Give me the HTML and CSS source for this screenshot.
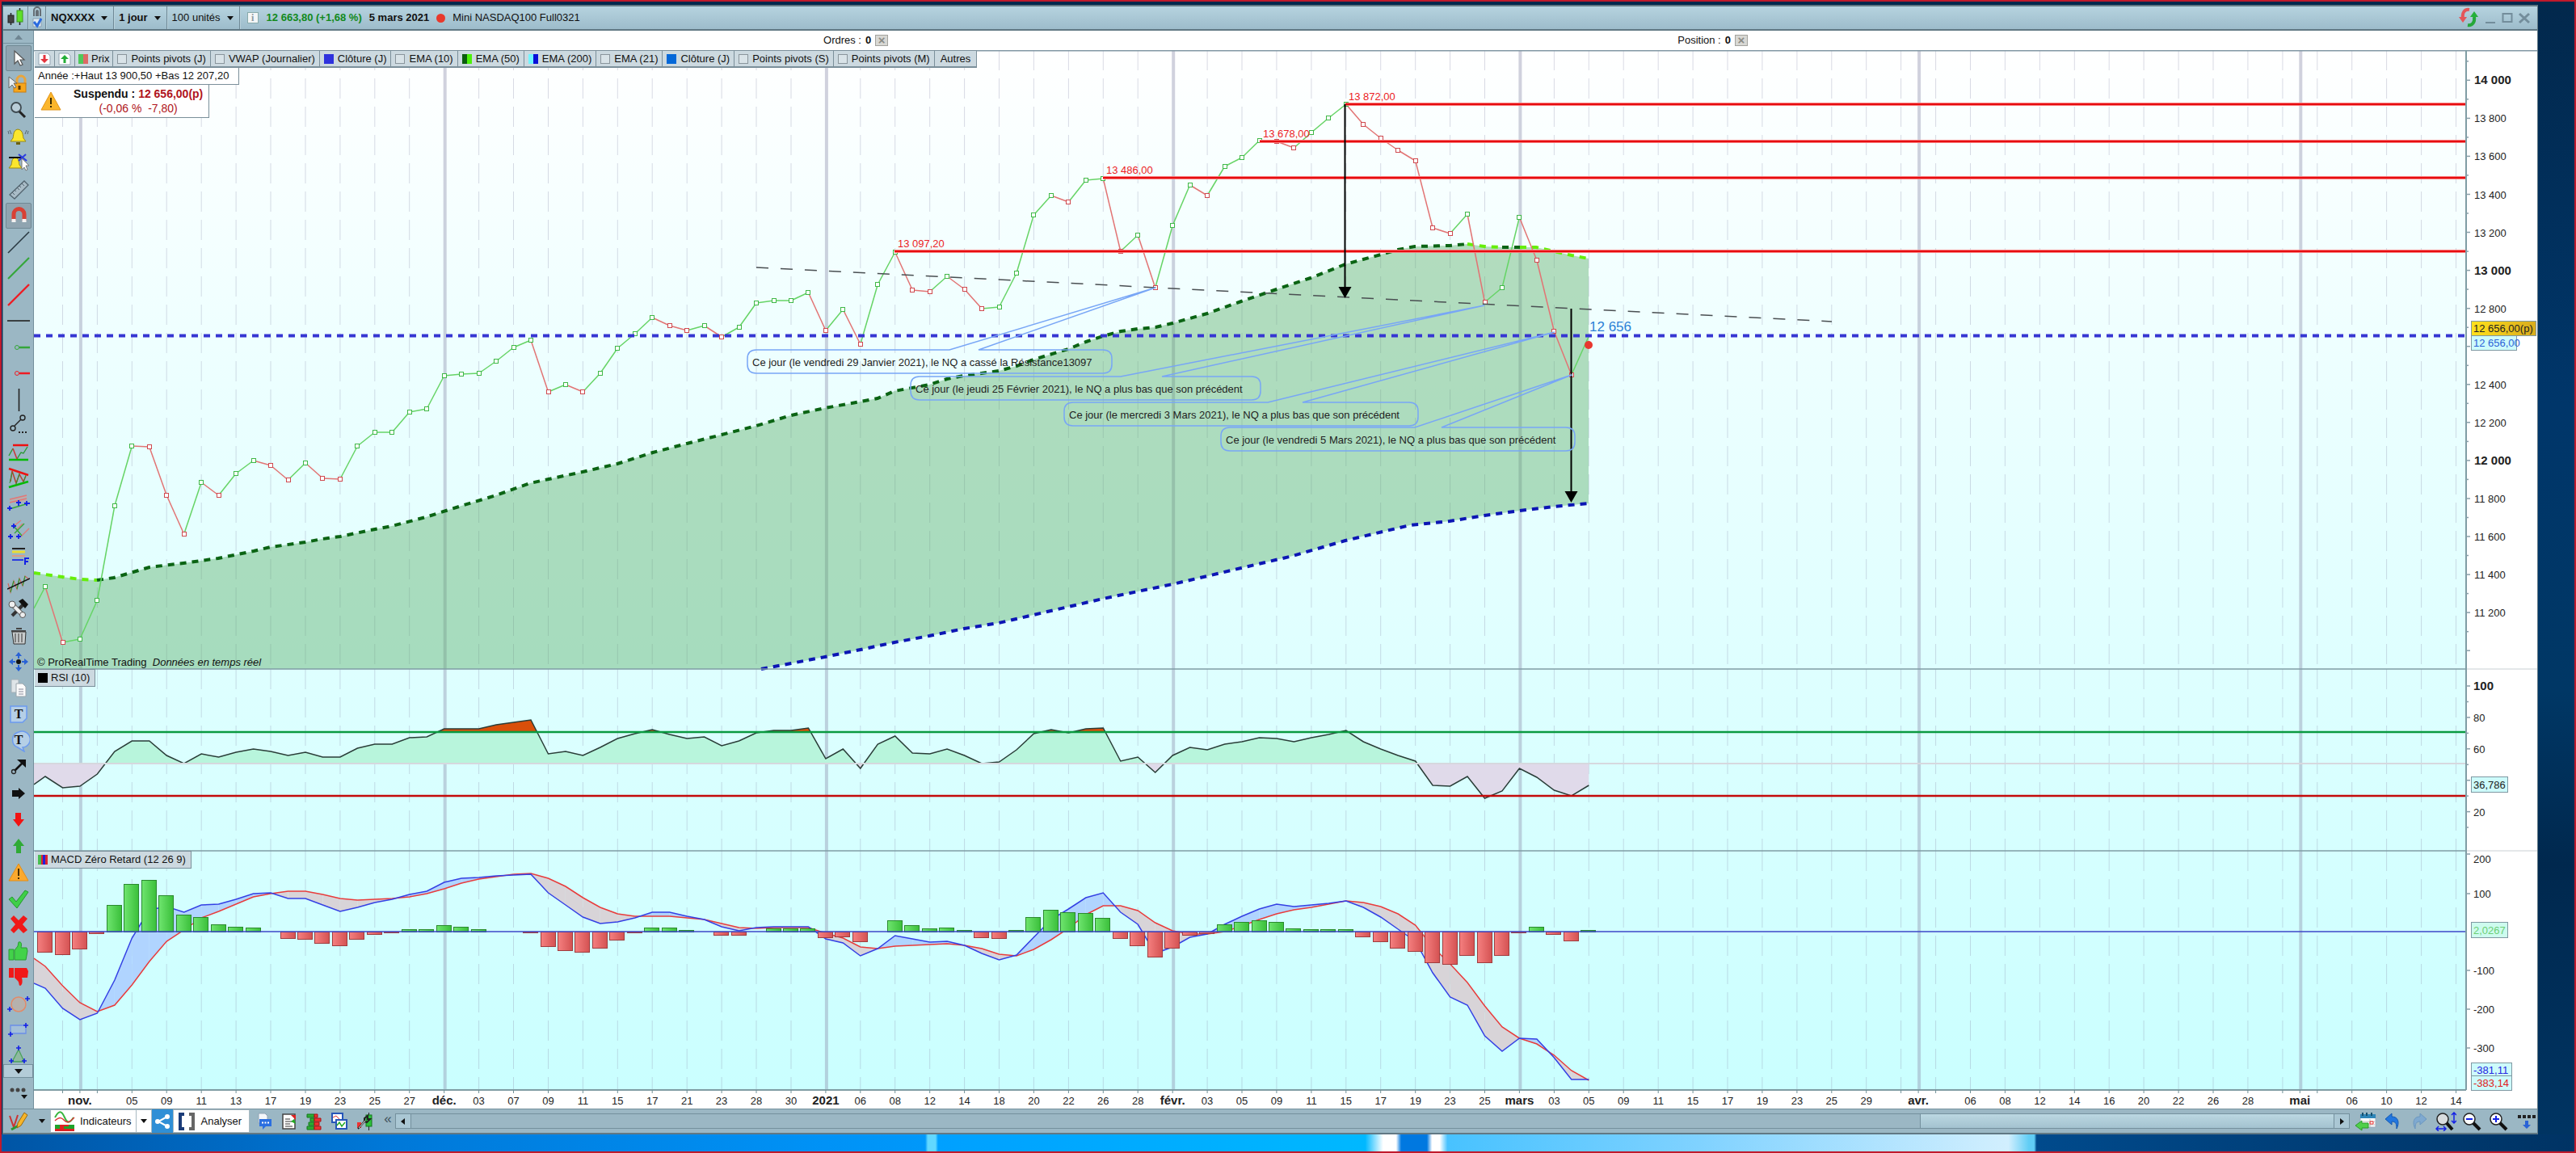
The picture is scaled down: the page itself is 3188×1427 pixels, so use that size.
FILE: index.html
```html
<!DOCTYPE html>
<html lang="fr">
<head>
<meta charset="utf-8">
<title>Mini NASDAQ100 Full0321</title>
<link rel="stylesheet" href="styles.css">
</head>
<body>
<div class="window">
  <header class="titlebar">
    <div class="cell candle"><svg width="20" height="30" viewBox="0 0 20 30"><path d="M4.500 9v15M15.500 3v21" stroke="#222" stroke-width="1.500"/><rect x="1" y="12" width="7" height="9" fill="#444" stroke="#222"/><rect x="12" y="6" width="7" height="14" fill="#5fe02a" stroke="#3a9a1c"/></svg></div>
    <div class="cell link"><svg width="16" height="28" viewBox="0 0 16 28"><path d="M4 12V5a4 4 0 0 1 8 0v7M7 12V6a1 1 0 0 1 2 0v6" fill="none" stroke="#666f76" stroke-width="2"/><path d="M3 15h10v10H3z" fill="#dfeaf2" stroke="#8a9fb0"/><path d="M4 19l4 5 5-9" fill="none" stroke="#2a6be0" stroke-width="3"/></svg></div>
    <button class="cell pick"><b>NQXXXX</b><i class="caret"></i></button>
    <button class="cell pick"><b>1 jour</b><i class="caret"></i></button>
    <button class="cell pick">100 unités<i class="caret"></i></button>
    <div class="quote"><span class="info">i</span><b class="up">12 663,80 (+1,68 %)</b><b>5 mars 2021</b><span class="dot"></span><span>Mini NASDAQ100 Full0321</span></div>
    <div class="controls">
      <button aria-label="Synchroniser"><svg width="26" height="26" viewBox="0 0 26 26"><path d="M14 3C8 2 5 7 6 13" fill="none" stroke="#e4565a" stroke-width="4"/><path d="M1 12h10l-5 7z" fill="#e4565a"/><path d="M12 22c6 1 9-4 8-10" fill="none" stroke="#25a73a" stroke-width="4"/><path d="M15 12h10l-5-7z" fill="#25b03a"/></svg></button>
      <button aria-label="Réduire"><svg width="14" height="16" viewBox="0 0 14 16"><path d="M1 14h12" stroke="#738d9b" stroke-width="2"/></svg></button>
      <button aria-label="Agrandir"><svg width="14" height="16" viewBox="0 0 14 16"><path d="M1.500 3h11v10h-11z" fill="none" stroke="#738d9b" stroke-width="2"/></svg></button>
      <button aria-label="Fermer"><svg width="14" height="16" viewBox="0 0 14 16"><path d="M1 3l12 11M13 3L1 14" stroke="#738d9b" stroke-width="3"/></svg></button>
    </div>
  </header>

  <div class="main">
    <nav class="tools">
      <button class="scroll-up" aria-label="Monter"><svg width="10" height="6" viewBox="0 0 10 6"><path d="M0 6l5-6 5 6z" fill="#6f8592"/></svg></button>
      <div class="tool-list">
        <button class="on"><svg viewBox="0 0 28 28"><path d="M9 5v16l4-4 3 6 3-1-3-6h5z" fill="#fff" stroke="#555" stroke-width="1.200"/></svg></button>
        <button><svg viewBox="0 0 28 28"><path d="M12 13V8a5 5 0 0 1 10 0v5" fill="none" stroke="#e9a53c" stroke-width="3"/><rect x="8" y="12" width="15" height="11" fill="#f7a61c" stroke="#c97d10"/><path d="M15 15v5" stroke="#5a3800" stroke-width="3"/><path d="M2 4v14l4-4 3 4 2-1-3-5h4z" fill="#e8eef2" stroke="#666"/></svg></button>
        <button><svg viewBox="0 0 28 28"><circle cx="11" cy="10" r="6" fill="#b9cdd8" stroke="#3f4b52" stroke-width="1.800"/><path d="M15 15l7 7" stroke="#222" stroke-width="3"/></svg></button>
        <button><svg viewBox="0 0 28 28"><path d="M13 4c-6 1-5 8-6 11l-3 4h19l-3-4c-1-3 0-10-7-11z" fill="#fbe62d" stroke="#9a8a10"/><path d="M11 20h5v3h-5z" fill="#6b6010"/><path d="M3 5l2 5M1 6l1 4M24 5l-2 5M26 6l-1 4" stroke="#55656e"/></svg></button>
        <button><svg viewBox="0 0 28 28"><path d="M10 7c-5 1-4 6-5 9l-3 4h16l-3-4c-1-3 0-8-5-9z" fill="#fbe62d" stroke="#9a8a10"/><path d="M2 7h18" stroke="#111" stroke-width="2"/><path d="M14 3l10 8M23 3l-9 8" stroke="#2b3be0" stroke-width="2"/><path d="M18 8v14l3-3 2 4 2-1-2-5h4z" fill="#fff" stroke="#777"/></svg></button>
        <button><svg viewBox="0 0 28 28"><path d="M3 20L21 3l5 5L9 25z" fill="#a9bcc7" stroke="#52646f" stroke-width="1.300"/><path d="M6 17l3 3M9 14l2 2M12 11l3 3M15 9l2 2M18 6l3 3" stroke="#52646f"/></svg></button>
        <button class="on"><svg viewBox="0 0 28 28"><path d="M8 20v-8a6.500 6.500 0 0 1 13 0v8" fill="none" stroke="#d94034" stroke-width="5"/><path d="M5.500 18h5v4h-5zM18.500 18h5v4h-5z" fill="#f2f2f2"/></svg></button>
        <button><svg viewBox="0 0 28 28"><path d="M1 27L27 1" stroke="#2a3a42" stroke-width="1.600"/></svg></button>
        <button><svg viewBox="0 0 28 28"><path d="M1 27L27 1" stroke="#35a63a" stroke-width="2.200"/></svg></button>
        <button><svg viewBox="0 0 28 28"><path d="M1 27L27 1" stroke="#ee1c24" stroke-width="2.400"/></svg></button>
        <button><svg viewBox="0 0 28 28"><path d="M0 14h28" stroke="#222" stroke-width="1.600"/></svg></button>
        <button><svg viewBox="0 0 28 28"><path d="M15 14h13" stroke="#35a63a" stroke-width="2.500"/><circle cx="12" cy="14" r="2.500" fill="none" stroke="#35a63a"/></svg></button>
        <button><svg viewBox="0 0 28 28"><path d="M15 14h13" stroke="#ee1c24" stroke-width="2.500"/><circle cx="12" cy="14" r="2.500" fill="none" stroke="#ee1c24"/></svg></button>
        <button><svg viewBox="0 0 28 28"><path d="M14.500 0v28" stroke="#222" stroke-width="1.600"/></svg></button>
        <button><svg viewBox="0 0 28 28"><path d="M9 14l8-8" stroke="#222" stroke-width="1.500"/><circle cx="7" cy="17" r="3" fill="none" stroke="#222" stroke-width="1.400"/><circle cx="19" cy="4" r="3" fill="none" stroke="#222" stroke-width="1.400"/><path d="M14 22h12" stroke="#222" stroke-width="2" stroke-dasharray="2 2"/></svg></button>
        <button><svg viewBox="0 0 28 28"><path d="M7 5h19" stroke="#e11" stroke-width="2.500"/><path d="M2 23h24" stroke="#0b0" stroke-width="2.500"/><path d="M2 18l5-9M12 22l5-8 3 1 5-8" fill="none" stroke="#2a9a35" stroke-width="1.400"/><path d="M7 9l5 13" stroke="#c33" stroke-width="1.500"/></svg></button>
        <button><svg viewBox="0 0 28 28"><path d="M2 2l24 8" stroke="#e11" stroke-width="2.500"/><path d="M2 25l24-7" stroke="#0b0" stroke-width="2.500"/><path d="M4 18l2-13 5 15 4-11 5 9 3-7" fill="none" stroke="#b5402f" stroke-width="1.500"/><path d="M3 20l3-13M11 21l4-13M20 19l3-9" stroke="#2a9a35"/></svg></button>
        <button><svg viewBox="0 0 28 28"><path d="M4 12V8l20-5v8z" fill="#c9a6a0" opacity=".6"/><path d="M3 8l21-5M3 12l21-5" stroke="#e07878" stroke-width="1.400"/><path d="M6 19l20-6" stroke="#35a63a" stroke-width="1.400"/><path d="M0 19h6M3 16v6M21 13h7M24 10v6M11 12h6M14 9v7" stroke="#1420e6" stroke-width="1.800"/></svg></button>
        <button><svg viewBox="0 0 28 28"><path d="M7 9l10-8M17 21l10-10M11 13L19 5" stroke="#de7a7a" stroke-width="1.400"/><path d="M9 17L21 5M8 8l10 12" stroke="#35a63a" stroke-width="1.400"/><path d="M5 8h6M8 5v6M1 21h6M4 18v6M11 21h6M14 18v6" stroke="#1420e6" stroke-width="1.800"/></svg></button>
        <button><svg viewBox="0 0 28 28"><path d="M6 4h16" stroke="#222" stroke-width="2"/><path d="M6 8h16" stroke="#e9dd35" stroke-width="3"/><path d="M6 13h16" stroke="#dd9a86" stroke-width="2"/><path d="M6 18h14" stroke="#2c3ce0" stroke-width="2"/><path d="M22 24v-8h5M22 20h4" stroke="#1420e6" stroke-width="2" fill="none"/></svg></button>
        <button><svg viewBox="0 0 28 28"><path d="M1 14l3 11 4-14 4 10 3-13 4 9 3-12 5 4" fill="none" stroke="#d0645a" stroke-width="1.200"/><path d="M4 25l4-14M12 21l3-13M19 17l3-12" stroke="#2a9a35" stroke-width="1.200"/><path d="M0 21L28 8" stroke="#111" stroke-width="1.500"/></svg></button>
        <button><svg viewBox="0 0 28 28"><path d="M6 22L19 9" stroke="#333" stroke-width="4"/><path d="M14 4l5-3 7 7-4 5z" fill="#111"/><path d="M5 7l14 14" stroke="#555" stroke-width="6"/><path d="M5 7l14 14" stroke="#eee" stroke-width="4"/><circle cx="6" cy="8" r="4" fill="#eee" stroke="#555"/><circle cx="19" cy="21" r="3.500" fill="#eee" stroke="#555"/></svg></button>
        <button><svg viewBox="0 0 28 28"><path d="M6 9h17l-1 15H8z" fill="#c8cccd" stroke="#333"/><path d="M10 11v11M14 11v11M18 11v11" stroke="#666" stroke-width="1.500"/><path d="M5 8h18M11 5h7" stroke="#444" stroke-width="2"/></svg></button>
        <button><svg viewBox="0 0 28 28"><path d="M14 3v22M3 14h22" stroke="#2a62d6" stroke-width="2" stroke-dasharray="7 8"/><path d="M14 2l4 5h-8zM14 26l4-5h-8zM2 14l5-4v8zM26 14l-5-4v8z" fill="#2a62d6"/><circle cx="14" cy="14" r="3" fill="#111"/></svg></button>
        <button><svg viewBox="0 0 28 28"><path d="M5 3h9v16H5z" fill="#dfe5e8" stroke="#a3afb6"/><path d="M11 8h8l4 4v12H11z" fill="#fafafa" stroke="#9aa5ac"/><path d="M14 15h6M14 18h6M14 21h6" stroke="#889"/></svg></button>
        <button><svg viewBox="0 0 28 28"><path d="M4 4h20v15l-5 5H4z" fill="#b5cfe6" stroke="#6b9af0" stroke-width="1.500"/><text x="14" y="19" class="tee">T</text></svg></button>
        <button><svg viewBox="0 0 28 28"><path d="M14 3a10 10 0 1 1 5 19l2 5-8-5a10 10 0 0 1 1-19z" fill="#b5cfe6" stroke="#6b9af0" stroke-width="1.500"/><text x="14" y="18" class="tee">T</text></svg></button>
        <button><svg viewBox="0 0 28 28"><path d="M9 19L20 8" stroke="#111" stroke-width="2.500"/><path d="M12 5h11v10z" fill="#111"/><circle cx="8" cy="20" r="2.500" fill="none" stroke="#222" stroke-width="1.300"/></svg></button>
        <button><svg viewBox="0 0 28 28"><path d="M6 10h8V7l8 7-8 7v-3H6z" fill="#111"/></svg></button>
        <button><svg viewBox="0 0 28 28"><path d="M10 6h7v8h4l-7 9-7-9h3z" fill="#f11313"/></svg></button>
        <button><svg viewBox="0 0 28 28"><path d="M11 23h6v-9h4l-7-9-7 9h4z" fill="#2faa35"/></svg></button>
        <button><svg viewBox="0 0 28 28"><path d="M14 4L2 25h24z" fill="#fba92d" stroke="#e58d15"/><path d="M14 10v9M14 21v2" stroke="#4a3000" stroke-width="2"/></svg></button>
        <button><svg viewBox="0 0 28 28"><path d="M2 15l4-3 5 6L22 4l4 2-14 20z" fill="#3fcf48" stroke="#239a2c"/></svg></button>
        <button><svg viewBox="0 0 28 28"><path d="M4 7l4-4 6 6 6-6 5 4-6 7 6 7-5 4-6-6-6 6-4-4 6-7z" fill="#f01818"/></svg></button>
        <button><svg viewBox="0 0 28 28"><path d="M2 12h6v13H2zM9 13l4-5 1-5c4-1 4 3 3 7h7l1 4-2 11H9z" fill="#42d24a" stroke="#2a9c33"/></svg></button>
        <button><svg viewBox="0 0 28 28"><path d="M2 3h6v12H2zM9 3h15l2 4-1 8h-7c1 4 1 9-2 10-2 0-1-4-3-6l-4-4z" fill="#f01818"/></svg></button>
        <button><svg viewBox="0 0 28 28"><circle cx="14" cy="15" r="9" fill="#b6b1ad" stroke="#e28a68" stroke-width="1.500"/><path d="M0 21h6M3 18v6M22 8h6M25 5v6" stroke="#1420e6" stroke-width="1.600"/></svg></button>
        <button><svg viewBox="0 0 28 28"><path d="M4 9h19v10H4z" fill="#a3bfd8" stroke="#6b8fe8" stroke-width="1.300"/><path d="M1 20h6M4 17v6M20 9h6M23 6v6" stroke="#1420e6" stroke-width="1.600"/></svg></button>
        <button><svg viewBox="0 0 28 28"><path d="M14 6l7 15H6z" fill="#8fb9a0" stroke="#4aa35a" stroke-width="1.300"/><path d="M11 4h6M14 1v6M2 20h6M5 17v6M18 20h6M21 17v6" stroke="#1420e6" stroke-width="1.600"/></svg></button>
      </div>
      <button class="scroll-down" aria-label="Descendre"><svg width="10" height="6" viewBox="0 0 10 6"><path d="M0 0l5 6 5-6z" fill="#111"/></svg></button>
      <button class="more" aria-label="Plus d'outils"><svg width="24" height="20" viewBox="0 0 24 20"><circle cx="4" cy="6" r="2.500" fill="#444"/><circle cx="11" cy="6" r="2.500" fill="#444"/><circle cx="18" cy="6" r="2.500" fill="#444"/><path d="M15 12h8l-4 5z" fill="#111"/></svg></button>
    </nav>

    <div class="content">
      <div class="orders">
        <div>Ordres : <b>0</b><button aria-label="Fermer les ordres">×</button></div>
        <div>Position : <b>0</b><button aria-label="Fermer la position">×</button></div>
      </div>
      <section class="chart" id="chart">
        <svg id="plot" role="img" aria-label="Graphique journalier"></svg>
        <div class="legend">
          <button class="io"><svg width="16" height="16" viewBox="0 0 16 16"><path d="M1 1h11l3 3v11H1z" fill="#fff" stroke="#93a5b3"/><path d="M6.500 3h3v5H13l-5 5-5-5h3.500z" fill="#e3343e"/></svg></button>
          <button class="io"><svg width="16" height="16" viewBox="0 0 16 16"><path d="M1 1h11l3 3v11H1z" fill="#fff" stroke="#93a5b3"/><path d="M6.500 13h3V8H13L8 3 3 8h3.500z" fill="#25ae38"/></svg></button>
          <button class="short"><i class="sw price"></i>Prix</button>
          <button><i class="sw off"></i>Points pivots (J)</button>
          <button><i class="sw off"></i>VWAP (Journalier)</button>
          <button><i class="sw close"></i>Clôture (J)</button>
          <button><i class="sw off"></i>EMA (10)</button>
          <button><i class="sw ema50"></i>EMA (50)</button>
          <button><i class="sw ema200"></i>EMA (200)</button>
          <button><i class="sw off"></i>EMA (21)</button>
          <button><i class="sw close2"></i>Clôture (J)</button>
          <button><i class="sw off"></i>Points pivots (S)</button>
          <button><i class="sw off"></i>Points pivots (M)</button>
          <button class="others">Autres</button>
        </div>
        <div class="box year">Année :+Haut 13 900,50 +Bas 12 207,20</div>
        <div class="box halted">
          <svg width="26" height="24" viewBox="0 0 26 24"><path d="M13 1L1 23h24z" fill="#fbb62d" stroke="#e2951a"/><path d="M13 8v8M13 18v2" stroke="#3a2a00" stroke-width="2"/></svg>
          <div><b>Suspendu : <span>12 656,00(p)</span></b><br><span>(-0,06 %&nbsp; -7,80)</span></div>
        </div>
        <div class="panes">
          <div class="pane price"><p class="copy">© ProRealTime Trading&nbsp; <em>Données en temps réel</em></p></div>
          <div class="pane rsi"><button class="tag"><i class="sw black"></i>RSI (10)</button></div>
          <div class="pane macd"><button class="tag"><i class="sw macdsw"></i>MACD Zéro Retard (12 26 9)</button></div>
        </div>
      </section>
    </div>
  </div>

  <footer class="toolbar">
    <button class="ico"><svg width="24" height="26" viewBox="0 0 24 26"><path d="M1 6l5 14 5-15" fill="none" stroke="#c33" stroke-width="2"/><path d="M3 23l9-5" stroke="#2a9a35" stroke-width="3"/><path d="M10 21l1-6L19 2l4 3-8 13z" fill="#f7b52a" stroke="#9a6a10"/></svg></button>
    <button class="drop"><i class="caret"></i></button>
    <button class="white"><svg width="26" height="26" viewBox="0 0 26 26"><path d="M1 8c5-9 8-9 12 0s7 6 11 0" fill="none" stroke="#3ab53f" stroke-width="2"/><path d="M1 12c6-5 8-4 12 0s8 0 12-4" fill="none" stroke="#d33" stroke-width="1.500"/><path d="M1 17h24v8H1z" fill="#d22"/><path d="M1 17h6v5h5v-3h6v-2h7v5H1z" fill="#1fa32a"/></svg>Indicateurs</button>
    <button class="white narrow"><i class="caret"></i></button>
    <button class="share" aria-label="Partager"><svg width="20" height="20" viewBox="0 0 20 20"><path d="M16 4L5 10l11 6" fill="none" stroke="#fff" stroke-width="2"/><circle cx="16" cy="4" r="3" fill="#fff"/><circle cx="4" cy="10" r="3" fill="#fff"/><circle cx="16" cy="16" r="3" fill="#fff"/></svg></button>
    <button class="white"><svg width="24" height="26" viewBox="0 0 24 26"><path d="M9 4H4v18h5" fill="none" stroke="#1b3c78" stroke-width="4"/><path d="M15 4h5v18h-5" fill="none" stroke="#666" stroke-width="4"/></svg><span class="analyse">Analyser</span></button>
    <div class="icons">
      <button><svg viewBox="0 0 20 22"><path d="M3 1h8l3 3v9H3z" fill="#f4f7fa" stroke="#8fa3b5"/><path d="M4 8h15v9h-7l-4 4v-4H4z" fill="#2b6fe0"/><path d="M7 12.500h10" stroke="#fff" stroke-width="2" stroke-dasharray="2 1.500"/></svg></button>
      <button><svg viewBox="0 0 20 22"><path d="M2 2h15v18H2z" fill="#fff" stroke="#444" stroke-width="1.500"/><path d="M5 8h6M5 11h8M5 14h6M5 17h9" stroke="#333"/><path d="M12 3h6v6z" fill="#d22"/><path d="M12 11l4-3 2 6z" fill="#2a2"/></svg></button>
      <button><svg viewBox="0 0 20 22"><path d="M1 2h9v4H1zM5 7h5v4H5zM3 12h7v4H3zM1 17h9v4H1z" fill="#2cae35" stroke="#14761c"/><path d="M10 2h4v4h-4zM10 7h8v4h-8zM10 12h6v4h-6zM10 17h8v4h-8z" fill="#e33" stroke="#a11"/></svg></button>
      <button><svg viewBox="0 0 20 22"><path d="M1 1h13v11H1z" fill="#fff" stroke="#2656b8" stroke-width="2"/><path d="M6 9h13v11H6z" fill="#fff" stroke="#2656b8" stroke-width="2"/><path d="M7 16l3-4 3 5 4-5" fill="none" stroke="#2a2" stroke-width="1.500"/><path d="M2 6l4-2 4 4" fill="none" stroke="#d33"/></svg></button>
      <button><svg viewBox="0 0 20 22"><path d="M15.500 0v22" stroke="#222"/><rect x="12" y="3" width="7" height="14" fill="#2cc23a" stroke="#14761c"/><rect x="1" y="12" width="5" height="7" fill="#e33"/><path d="M2 20l8-9v-4l4-3v4h3l-4 4-2-1" fill="none" stroke="#222" stroke-width="2"/><path d="M3 19l8-9" stroke="#eee"/></svg></button>
    </div>
    <span class="fold">«</span>
    <div class="scroller">
      <button aria-label="Gauche"><svg width="5" height="8" viewBox="0 0 5 8"><path d="M5 0v8L0 4z" fill="#111"/></svg></button>
      <div class="track"><div class="thumb"></div></div>
      <button aria-label="Droite"><svg width="5" height="8" viewBox="0 0 5 8"><path d="M0 0v8l5-4z" fill="#111"/></svg></button>
    </div>
    <div class="right">
      <button><svg viewBox="0 0 26 24"><path d="M6 4h19v15H6z" fill="#fff" stroke="#9ab"/><path d="M6 3h19v5H6z" fill="#2f86b8"/><path d="M9 1v4M14 1v4M20 1v4" stroke="#17506f" stroke-width="2"/><path d="M9 12h15M9 16h15M18 9v10" stroke="#bbb"/><path d="M18 12h4v3h-4z" fill="none" stroke="#e33"/><path d="M0 17l8-6v3h8v6H8v3z" fill="#4fd04a" stroke="#2b9a2b"/></svg></button>
      <button><svg viewBox="0 0 26 24"><path d="M4 9l8-7v4c8 0 10 7 6 15 0-6-1-9-6-9v4z" fill="#2277e0" stroke="#1458b0"/></svg></button>
      <button><svg viewBox="0 0 26 24"><path d="M22 9l-8-7v4C6 6 4 13 8 21c0-6 1-9 6-9v4z" fill="#7fa9d0" stroke="#6b97c0"/></svg></button>
      <button><svg viewBox="0 0 26 24"><circle cx="9" cy="9" r="7" fill="#d8dcde" stroke="#222" stroke-width="1.500"/><path d="M14 14l7 8" stroke="#111" stroke-width="4"/><path d="M23 2v11M20 4l3-3 3 3M20 11l3 3 3-3M2 21h10M4 18l-3 3 3 3M10 18l3 3-3 3" fill="none" stroke="#1420e6" stroke-width="1.500"/></svg></button>
      <button><svg viewBox="0 0 26 24"><circle cx="9" cy="9" r="7" fill="#fff" stroke="#222" stroke-width="1.500"/><path d="M14 14l8 8" stroke="#111" stroke-width="4"/><path d="M5 9h8" stroke="#1420e6" stroke-width="2"/></svg></button>
      <button><svg viewBox="0 0 26 24"><circle cx="9" cy="9" r="7" fill="#fff" stroke="#222" stroke-width="1.500"/><path d="M14 14l8 8" stroke="#111" stroke-width="4"/><path d="M5 9h8M9 5v8" stroke="#1420e6" stroke-width="2"/></svg></button>
      <button><svg viewBox="0 0 26 24"><path d="M3 6h22" stroke="#222" stroke-width="4" stroke-dasharray="4 2"/><path d="M12 11h4v5h3l-5 5-5-5h3z" fill="#2a62d6"/></svg></button>
    </div>
  </footer>
</div>
<div class="wallpaper"></div>
<script src="chart.js"></script>
</body>
</html>
```
FILE: styles.css
```css
* { box-sizing: border-box; }

body {
  margin: 0;
  height: 100vh;
  min-height: 700px;
  display: flex;
  flex-direction: column;
  padding-top: 4px;
  border: 2px solid #c01a2c;
  background: linear-gradient(#02284c, #00366a 35%, #003765 60%, #00284e 75%, #003564);
  font: 13px/16px "Liberation Sans", Arial, sans-serif;
  color: #111;
}

button {
  margin: 0;
  padding: 0;
  border: 0;
  background: none;
  font: inherit;
  color: inherit;
}

svg { display: block; }

.window {
  flex: 1;
  min-height: 0;
  display: flex;
  flex-direction: column;
  margin: 0 45px 0 1px;
  border: solid #617884;
  border-width: 2px 1px;
  background: #9bb7c4;
}

.titlebar {
  flex: none;
  height: 30px;
  display: flex;
  align-items: stretch;
  background: linear-gradient(#b6d3df, #9dbccb);
  border-bottom: 2px solid #617884;
}

.cell {
  display: flex;
  align-items: center;
  justify-content: center;
  border-right: 1px solid #6f8996;
  box-shadow: 1px 0 #b9d2dc;
}

.candle { width: 31px; }
.link { width: 22px; }

.pick {
  gap: 8px;
  padding: 0 7px 0 6px;
}

.pick b { font-size: 13px; }

.caret {
  width: 0;
  height: 0;
  border: 4px solid transparent;
  border-top: 5px solid #111;
  border-bottom: 0;
}

.quote {
  display: flex;
  align-items: center;
  gap: 9px;
  padding-left: 9px;
}

.info {
  width: 14px;
  height: 14px;
  margin-right: 1px;
  background: #f4f6f7;
  border: 1px solid #8aa;
  color: #8b989e;
  font: bold 12px/12px "Liberation Serif", serif;
  text-align: center;
}

.up { color: #128a1c; }

.dot {
  width: 11px;
  height: 11px;
  border-radius: 50%;
  background: #e8392c;
}

.controls {
  margin-left: auto;
  display: flex;
  align-items: center;
  gap: 7px;
  padding-right: 9px;
}

.main {
  flex: 1;
  min-height: 0;
  display: flex;
}

.tools {
  flex: none;
  width: 38px;
  display: flex;
  flex-direction: column;
  background: #9bb7c4;
  border-right: 1px solid #74909d;
}

.tools button {
  flex: none;
  display: flex;
  align-items: center;
  justify-content: center;
}

.tools .scroll-up {
  height: 16px;
  border-bottom: 1px solid #74909d;
}

.tool-list {
  flex: 1;
  min-height: 0;
  overflow: hidden;
  padding-top: 2px;
}

.tools .tool-list button {
  width: 32px;
  height: calc((100% + 6px) / 39);
  margin-left: 3px;
  border: 1px solid transparent;
}

.tools .tool-list .on {
  background: #8fa4b0;
  border-color: #708994;
  border-radius: 2px;
}

.tool-list svg {
  width: 28px;
  height: 28px;
}

.tee {
  font: bold 16px "Liberation Serif", serif;
  text-anchor: middle;
  fill: #111;
}

.tools .scroll-down {
  height: 17px;
  background: #b3ccd8;
  border: 1px solid #74909d;
}

.tools .more { height: 38px; }

.content {
  flex: 1;
  min-width: 0;
  display: flex;
  flex-direction: column;
  background: #fff;
}

.orders {
  flex: none;
  height: 24px;
  display: flex;
  justify-content: space-evenly;
  align-items: center;
}

.orders div {
  display: flex;
  align-items: center;
  gap: 5px;
}

.orders button {
  width: 16px;
  height: 14px;
  background: #d8d8d4;
  border: 1px solid #a3a39e;
  color: #8b8b86;
  font: bold 15px/12px "Liberation Sans", sans-serif;
}

.chart {
  flex: 1;
  min-height: 0;
  position: relative;
}

#plot {
  position: absolute;
  inset: 0;
  width: 100%;
  height: 100%;
}

#plot text { font-family: "Liberation Sans", Arial, sans-serif; font-size: 13px; fill: #222; }
#plot .strong { font-weight: bold; font-size: 15px; }
#plot .level { fill: #ec1c24; }
#plot .last { font-size: 17px; fill: #2d7fd6; }
#plot .mid { text-anchor: middle; }
#plot .blue { fill: #2b62d8; }
#plot .navy { fill: #2626e0; }
#plot .red { fill: #e02020; }
#plot .green { fill: #6ccf75; }

.legend {
  position: relative;
  display: inline-flex;
  vertical-align: top;
  height: 22px;
  margin-left: 1px;
  background: #ccd9e0;
  border: solid #7b8f9a;
  border-width: 1px 0 2px;
}

.legend button {
  display: flex;
  align-items: center;
  gap: 5px;
  padding: 0 5px;
  border-right: 1px solid #7b8f9a;
}

.legend .io { width: 25px; padding: 0 4px; }
.legend .short { gap: 4px; padding: 0 4px; }
.legend .others { padding: 0 7px; }

.sw {
  flex: none;
  width: 12px;
  height: 12px;
}

.sw.off { border: 1px solid #8a959c; background: #d9e3e8; }
.sw.price { background: linear-gradient(90deg, #4fc95a 50%, #dd6a66 50%); }
.sw.close { background: #2f32dd; }
.sw.close2 { background: #0468d8; }
.sw.ema50 { background: linear-gradient(90deg, #0b5c0e 50%, #4df20a 50%); }
.sw.ema200 { background: linear-gradient(90deg, #72f5ff 50%, #0a10d8 50%); }
.sw.black { background: #000; }
.sw.macdsw { background: linear-gradient(90deg, #46bf50 30%, #d23 30% 50%, #22d 50% 75%, #d23 75%); }

.box {
  position: relative;
  width: max-content;
  margin-left: 1px;
  background: #fff;
  border: solid #7b8f9a;
  border-width: 0 1px 1px 0;
}

.year {
  height: 21px;
  padding: 2px 12px 2px 4px;
}

.halted {
  height: 41px;
  display: flex;
  align-items: center;
  gap: 15px;
  padding: 0 7px;
  font-size: 14px;
  line-height: 18px;
  text-align: center;
}

.halted span { color: #b01420; }

.panes {
  position: absolute;
  inset: 0 88px 23px 0;
  display: grid;
  grid-template-rows: 766fr 225fr 296fr;
  pointer-events: none;
}

.pane { display: flex; align-items: flex-start; }
.pane.price { align-items: flex-end; }

.copy { margin: 0 4px; }

.tag {
  display: flex;
  align-items: center;
  gap: 4px;
  height: 22px;
  padding: 0 6px 0 4px;
  margin-left: 1px;
  background: #ccd9e0;
  border: solid #7b8f9a;
  border-width: 1px 1px 1px 0;
}

.toolbar {
  flex: none;
  height: 30px;
  display: flex;
  align-items: stretch;
  background: #9bb7c4;
  border-top: 1px solid #74909d;
}

.toolbar button {
  flex: none;
  display: flex;
  align-items: center;
  justify-content: center;
}

.toolbar .ico { width: 38px; }
.toolbar .drop { width: 20px; }

.toolbar .white {
  gap: 6px;
  padding: 0 5px 0 4px;
  background: #fff;
  border: 1px solid #a9bac2;
}

.toolbar .narrow { width: 19px; padding: 0; border-left: 0; }
.toolbar .share { width: 26px; background: #2f8fd6; }
.analyse { padding-right: 4px; }

.icons {
  display: flex;
  gap: 9px;
  padding-left: 7px;
}

.icons svg { width: 22px; height: 22px; }

.fold {
  padding: 4px 4px 0 13px;
  font-size: 17px;
  color: #3f525c;
}

.scroller {
  flex: 1;
  display: flex;
  margin: 5px 0;
  border: 1px solid #74909d;
}

.scroller button { width: 18px; background: #aac7d4; }

.track {
  flex: 1;
  display: flex;
  justify-content: flex-end;
  border: solid #74909d;
  border-width: 0 1px;
}

.thumb {
  width: 21.500%;
  background: linear-gradient(#bcd8e2, #a3c2cf);
  border-left: 1px solid #74909d;
}

.right {
  display: flex;
  gap: 7px;
  padding: 0 1px 0 7px;
}

.right svg { width: 26px; height: 24px; }

.wallpaper {
  flex: none;
  height: 21px;
  background: linear-gradient(90deg, #0055a5, #0078d8 15%, #0092f6 32%, #0098fa 35.900%, #62d8ff 36% 36.300%, #00a0ff 36.400%, #00b8ff 53%, #fff 53.700% 54.200%, #0078e0 54.400% 55.400%, #fff 55.600% 55.900%, #48c2ff 56.200%, #80d2ff 66%, #d2effe 78%, #60cdf5 78.800% 79%, #004a8c 79.100%, #003364);
}
```
FILE: chart.js
```js
// Coordinates below are in design units: the plot spans x 42-3052, y 62-1349.
const LEFT = 42, RIGHT = 3052, TOP = 62, BOTTOM = 1349;
const RSI_TOP = 828, MACD_TOP = 1053, ZERO = 1153;
const FIRST = 56, STEP = 21.464;

const close = [726,795,791,743,626,552,553,613,661,597,613,586,570,576,594,573,592,593,552,535,535,510,506,465,463,462,447,430,421,485,476,485,462,431,413,393,403,409,403,417,405,375,372,372,362,409,383,426,352,312,359,361,342,358,382,380,338,266,242,250,223,221,311,291,356,279,229,242,206,195,174,175,183,164,146,129,154,171,186,199,282,289,265,374,356,269,322,410,464,416];
const rsi = [961,975,973,958,930,917,917,935,945,933,937,931,927,930,935,931,937,937,926,921,921,913,912,902,902,902,897,894,891,933,930,935,925,914,908,903,909,914,912,923,917,907,904,904,901,939,927,951,921,911,932,933,927,935,945,943,928,908,903,907,902,901,942,937,956,935,925,928,921,918,913,914,918,913,909,904,918,927,935,942,972,973,961,988,979,951,962,978,985,972];
const macd = [1223,1248,1262,1254,1213,1161,1126,1122,1129,1120,1119,1113,1106,1105,1112,1112,1120,1128,1123,1117,1113,1107,1103,1092,1087,1086,1084,1083,1082,1105,1120,1135,1143,1141,1136,1129,1129,1134,1138,1147,1152,1148,1147,1147,1147,1162,1167,1183,1174,1158,1162,1166,1165,1170,1180,1188,1182,1160,1138,1125,1111,1105,1129,1144,1180,1172,1160,1156,1144,1134,1125,1119,1122,1120,1118,1115,1123,1135,1150,1165,1204,1234,1244,1282,1301,1285,1286,1309,1336,1336];
const signal = [1196,1220,1241,1252,1244,1219,1190,1165,1151,1136,1128,1119,1110,1106,1103,1103,1107,1112,1114,1113,1112,1110,1106,1100,1093,1088,1085,1082,1081,1087,1097,1111,1123,1131,1134,1134,1134,1136,1138,1143,1148,1149,1148,1148,1148,1155,1161,1172,1174,1171,1170,1169,1168,1170,1174,1181,1183,1175,1163,1149,1132,1121,1121,1127,1142,1152,1156,1156,1153,1146,1138,1131,1126,1123,1119,1115,1117,1122,1131,1145,1172,1193,1216,1245,1271,1285,1292,1306,1325,1337];
const hist = [-25,-28,-21,-2,33,59,64,45,21,18,9,6,5,0,-8,-9,-14,-17,-9,-3,-1,3,3,8,6,3,0,0,-1,-18,-23,-25,-20,-10,-1,5,5,2,0,-4,-4,0,4,4,4,-7,-6,-12,0,14,8,4,5,2,-7,-8,2,18,27,24,23,17,-8,-17,-31,-20,-4,-2,9,12,14,12,4,3,3,3,-6,-12,-20,-24,-38,-40,-29,-38,-29,-1,6,-3,-11,2];

const ema50 = [[42,709],[77,714],[99,717],[120,718],[141,715],[185,702],[227,697],[270,691],[314,682],[335,677],[378,671],[399,667],[421,664],[464,655],[485,651],[527,640],[571,626],[614,613],[656,598],[679,593],[721,584],[764,574],[808,560],[850,549],[893,538],[936,527],[979,514],[1021,505],[1065,497],[1086,493],[1107,484],[1150,476],[1172,469],[1193,465],[1236,459],[1258,453],[1279,445],[1322,432],[1344,423],[1365,416],[1387,410],[1408,407],[1430,405],[1451,400],[1494,388],[1536,373],[1580,358],[1622,344],[1665,327],[1709,315],[1730,309],[1751,305],[1794,304],[1816,302],[1837,305],[1859,306],[1881,306],[1901,306],[1923,311],[1945,316],[1966,320]];
const ema200 = [[942,828],[979,821],[1021,813],[1065,804],[1107,795],[1150,787],[1193,778],[1236,771],[1279,761],[1322,751],[1365,741],[1408,732],[1451,723],[1494,713],[1536,703],[1600,688],[1665,669],[1745,650],[1794,645],[1837,638],[1881,632],[1923,627],[1966,623]];

const months = { 2: 'nov.', 23: 'déc.', 45: '2021', 65: 'févr.', 85: 'mars', 108: 'avr.', 130: 'mai' };
const days = { 5:'05',7:'09',9:'11',11:'13',13:'17',15:'19',17:'23',19:'25',21:'27',25:'03',27:'07',29:'09',31:'11',33:'15',35:'17',37:'21',39:'23',41:'28',43:'30',47:'06',49:'08',51:'12',53:'14',55:'18',57:'20',59:'22',61:'26',63:'28',67:'03',69:'05',71:'09',73:'11',75:'15',77:'17',79:'19',81:'23',83:'25',87:'03',89:'05',91:'09',93:'11',95:'15',97:'17',99:'19',101:'23',103:'25',105:'29',111:'06',113:'08',115:'12',117:'14',119:'16',121:'20',123:'22',125:'26',127:'28',133:'06',135:'10',137:'12',139:'14' };

const levels = [[1665,129,'13 872,00'],[1559,175,'13 678,00'],[1365,220,'13 486,00'],[1107,311,'13 097,20']];
const notes = [
  { x: 925, y: 433, r: 1376, base: [1175, 1211], tip: [1430, 356], text: 'Ce jour (le vendredi 29 Janvier 2021), le NQ a cassé la Résistance13097' },
  { x: 1127, y: 466, r: 1560, base: [1387, 1438], tip: [1837, 378], text: 'Ce jour (le jeudi 25 Février 2021), le NQ a plus bas que son précédent' },
  { x: 1317, y: 498, r: 1755, base: [1569, 1612], tip: [1924, 411], text: 'Ce jour (le mercredi 3 Mars 2021), le NQ a plus bas que son précédent' },
  { x: 1511, y: 529, r: 1949, base: [1751, 1784], tip: [1945, 464], text: 'Ce jour (le vendredi 5 Mars 2021), le NQ a plus bas que son précédent' }
];

const svg = document.getElementById('plot');

function draw() {
  const W = svg.clientWidth, H = svg.clientHeight;
  const pw = W - 88, ph = H - 23;
  const X = x => +((x - LEFT) / (RIGHT - LEFT) * pw).toFixed(1);
  const Y = y => +((y - TOP) / (BOTTOM - TOP) * ph).toFixed(1);
  const BX = i => X(FIRST + STEP * i);
  const out = [];
  const line = (x1, y1, x2, y2, c, w = 1, extra = '') => out.push(`<line x1="${x1}" y1="${y1}" x2="${x2}" y2="${y2}" stroke="${c}" stroke-width="${w}" ${extra}/>`);
  const text = (x, y, s, cls = '') => out.push(`<text x="${x}" y="${y}" class="${cls}">${s}</text>`);
  const rect = (x, y, w, h, f, extra = '') => out.push(`<rect x="${x}" y="${y}" width="${w}" height="${h}" fill="${f}" ${extra}/>`);
  const pts = a => a.map(p => X(p[0]) + ',' + Y(p[1])).join(' ');
  const poly = (a, c, w, extra = '') => out.push(`<polyline points="${pts(a)}" fill="none" stroke="${c}" stroke-width="${w}" ${extra}/>`);
  const area = (a, f, extra = '') => out.push(`<polygon points="${pts(a)}" fill="${f}" ${extra}/>`);
  const series = (a, start) => [[LEFT, start], ...a.map((y, i) => [FIRST + STEP * i, y])];

  out.push(`<defs>
    <linearGradient id="bg" x2="0" y2="1"><stop offset="0" stop-color="#fff"/><stop offset=".3" stop-color="#edffff"/><stop offset="1" stop-color="#caffff"/></linearGradient>
    <linearGradient id="gb"><stop offset="0" stop-color="#6fe56f"/><stop offset="1" stop-color="#3abf3a"/></linearGradient>
    <linearGradient id="rb"><stop offset="0" stop-color="#f58080"/><stop offset="1" stop-color="#d45252"/></linearGradient>
    <linearGradient id="yb"><stop offset="0" stop-color="#ffe11c"/><stop offset="1" stop-color="#d9ab1e"/></linearGradient>
    <clipPath id="hi"><rect x="0" y="${Y(RSI_TOP)}" width="${pw}" height="${Y(906) - Y(RSI_TOP)}"/></clipPath>
    <clipPath id="up"><rect x="0" y="${Y(RSI_TOP)}" width="${pw}" height="${Y(945) - Y(RSI_TOP)}"/></clipPath>
    <clipPath id="dn"><rect x="0" y="${Y(945)}" width="${pw}" height="${Y(MACD_TOP) - Y(945)}"/></clipPath>
  </defs>`);
  rect(0, 0, pw, ph, 'url(#bg)');

  // time grid
  const ticks = [];
  for (let i = 1; i <= 139; i += 2) ticks.push(i);
  for (const i of ticks) {
    if (months[i]) continue;
    for (const [a, b] of [[TOP, RSI_TOP], [RSI_TOP, MACD_TOP], [MACD_TOP, BOTTOM]])
      line(BX(i), Y(a), BX(i), Y(b), '#8c8caa', 1, 'stroke-opacity=".32" stroke-dasharray="25 10"');
  }
  for (const i in months) line(BX(+i) + 1, 0, BX(+i) + 1, ph, '#8c8caa', 4, 'stroke-opacity=".4"');

  // moving averages and the band between them
  area([...ema50, ...ema200.slice().reverse(), [LEFT, RSI_TOP]], 'rgba(87,172,99,.42)');
  const dash = 'stroke-dasharray="8 7"';
  poly(ema50.slice(0, 4), '#66ee0a', 4, dash);
  poly(ema50.slice(3, 54), '#0b6414', 4, dash);
  poly(ema50.slice(53, 56), '#66ee0a', 4, dash);
  poly(ema50.slice(55, 57), '#0b6414', 4, dash);
  poly(ema50.slice(56), '#66ee0a', 4, dash);
  poly(ema200, '#0c16b4', 4, dash);

  // closing price
  const p = series(close, 753);
  for (let i = 1; i < p.length; i++)
    poly([p[i - 1], p[i]], p[i][1] <= p[i - 1][1] ? '#66d466' : '#e27474', 1.5);
  for (let i = 1; i < p.length - 1; i++)
    rect(Math.round(X(p[i][0])) - 2.5, Math.round(Y(p[i][1])) - 2.5, 5, 5, '#fff', `stroke="${p[i][1] <= p[i - 1][1] ? '#3fb848' : '#cf4a50'}"`);

  poly([[936, 331], [2267, 398]], '#4a4f52', 1.5, 'stroke-dasharray="15 15"');
  line(0, Y(415.5), pw, Y(415.5), '#3636d2', 4, dash);
  for (const [x, y, s] of levels) {
    line(X(x), Y(y), pw, Y(y), '#ffa0a0', 4);
    line(X(x), Y(y), pw, Y(y), '#e60d10', 2.5);
    text(X(x) + 4, Y(y) - 5, s, 'level');
  }
  for (const [x, a, b] of [[1664.5, 129, 369], [1944.5, 382, 622]]) {
    line(X(x), Y(a), X(x), Y(b) - 10, '#000', 2);
    out.push(`<path d="M${X(x) - 8} ${Y(b) - 14}h16l-8 14z"/>`);
  }
  for (const n of notes) {
    const x = X(n.x), y = Y(n.y), r = X(n.r), b = y + 29;
    out.push(`<path d="M${x + 11} ${y}H${X(n.base[0])}L${X(n.tip[0])} ${Y(n.tip[1])}L${X(n.base[1])} ${y}H${r - 11}q11 0 11 11v7q0 11 -11 11H${x + 11}q-11 0 -11 -11v-7q0 -11 11 -11z" fill="none" stroke="#78a6f6" stroke-width="1.5"/>`);
    text(x + 6, b - 9, n.text);
  }
  text(X(1967), Y(410), '12 656', 'last');
  out.push(`<ellipse cx="${X(1966)}" cy="${Y(427)}" rx="5" ry="5" fill="#e8372f"/>`);

  // RSI
  const r = series(rsi, 971);
  const end = FIRST + STEP * 89;
  area([...r, [end, 945], [LEFT, 945]], '#b8f5dc', 'clip-path="url(#up)"');
  area([...r, [end, 945], [LEFT, 945]], '#e0daea', 'clip-path="url(#dn)"');
  area([...r, [end, 1000], [LEFT, 1000]], '#d94f0a', 'clip-path="url(#hi)"');
  poly(r, '#2a3d38', 1.5);
  line(0, Y(906), pw, Y(906), '#0a9a40', 2.5);
  line(0, Y(945), pw, Y(945), '#d6d8de', 2);
  line(0, Y(985), pw, Y(985), '#c40a0a', 2.5);

  // MACD
  const m = series(macd, 1217), s = series(signal, 1186);
  for (let i = 1; i < m.length; i++) {
    const d0 = s[i - 1][1] - m[i - 1][1], d1 = s[i][1] - m[i][1];
    const col = d => d > 0 ? '#b0d4ff' : '#d8d4d8';
    if (d0 * d1 < 0) {
      const t = d0 / (d0 - d1);
      const c = [m[i - 1][0] + t * (m[i][0] - m[i - 1][0]), m[i - 1][1] + t * (m[i][1] - m[i - 1][1])];
      area([m[i - 1], c, s[i - 1]], col(d0));
      area([m[i], c, s[i]], col(d1));
    } else area([m[i - 1], m[i], s[i], s[i - 1]], col(d0 + d1));
  }
  poly(s, '#e83c3c', 1.5);
  poly(m, '#3440e4', 1.5);
  hist.forEach((h, i) => {
    if (!h) return;
    const y0 = Y(ZERO), y1 = Y(ZERO - h);
    rect(Math.round(BX(i)) - 9.5, Math.round(Math.min(y0, y1)) + .5, 18, Math.max(1, Math.round(Math.abs(y1 - y0))), h > 0 ? 'url(#gb)' : 'url(#rb)', `stroke="${h > 0 ? '#2a8a2e' : '#a03c3e'}"`);
  });
  line(0, Y(ZERO), pw, Y(ZERO), '#3c46c8', 1.5);

  // frames
  for (const y of [RSI_TOP, MACD_TOP]) {
    line(0, Y(y), pw, Y(y), '#7f9da4', 1.5);
    line(pw, Y(y), W, Y(y), '#c9d0d4', 1);
  }
  line(0, 0.5, W, 0.5, '#8298a4', 2);
  line(0, ph, pw, ph, '#7f9da4', 2);
  line(pw, 0, pw, ph, '#7f9da4', 2);

  // value axes
  for (let v = 14100; v >= 11000; v -= 100) {
    const y = Y(99.3 + (14000 - v) * 0.2353);
    const major = v % 200 === 0;
    line(pw, y, pw + (major ? 5 : 3), y, '#8aa0aa', 1.5);
    if (major && v !== 12600 && v !== 11000) text(pw + 10, y + 5, String(v).slice(0, 2) + ' ' + String(v).slice(2), v % 1000 ? '' : 'strong');
  }
  for (let v = 100; v >= 10; v -= 10) {
    const y = Y(849 + (100 - v) * 1.945);
    line(pw, y, pw + (v % 20 ? 3 : 5), y, '#8aa0aa', 1.5);
    if (v % 20 === 0 && v !== 40) text(pw + 9, y + 5, v, v === 100 ? 'strong' : '');
  }
  for (const [v, y] of [[200, 1057], [100, 1106], [-100, 1201], [-200, 1249], [-300, 1297]]) {
    line(pw, Y(y), pw + 5, Y(y), '#8aa0aa', 1.5);
    text(pw + 9, Y(y) + (v === 200 ? 11 : 5), v);
  }
  const tag = (y, w, h, fill, label, cls) => {
    rect(pw + 6.5, Math.round(Y(y)) + .5, w, h, fill, 'stroke="#7f98a2"');
    text(pw + 9, Y(y) + h - 4, label, cls);
  };
  tag(415, 56, 18, '#cdfbfb', '12 656,00', 'blue');
  tag(397, 80, 18, 'url(#yb)', '12 656,00(p)', '');
  tag(961, 45, 19, '#cdfbfb', '36,786', '');
  tag(1141, 45, 19, '#cdfbee', '2,0267', 'green');
  tag(1315, 50, 18, '#cdfbfb', '-381,11', 'navy');
  tag(1331, 50, 18, '#cdfbfb', '-383,14', 'red');

  // dates
  for (const i of [...ticks, 2, 108, 130]) line(BX(i), ph, BX(i), ph + 4, '#6f8f96', 1);
  for (const i in days) text(BX(+i), ph + 18, days[i], 'mid');
  for (const i in months) text(BX(+i), ph + 18, months[i], 'mid strong');

  svg.innerHTML = out.join('');
}

draw();
window.addEventListener('resize', draw);
```
